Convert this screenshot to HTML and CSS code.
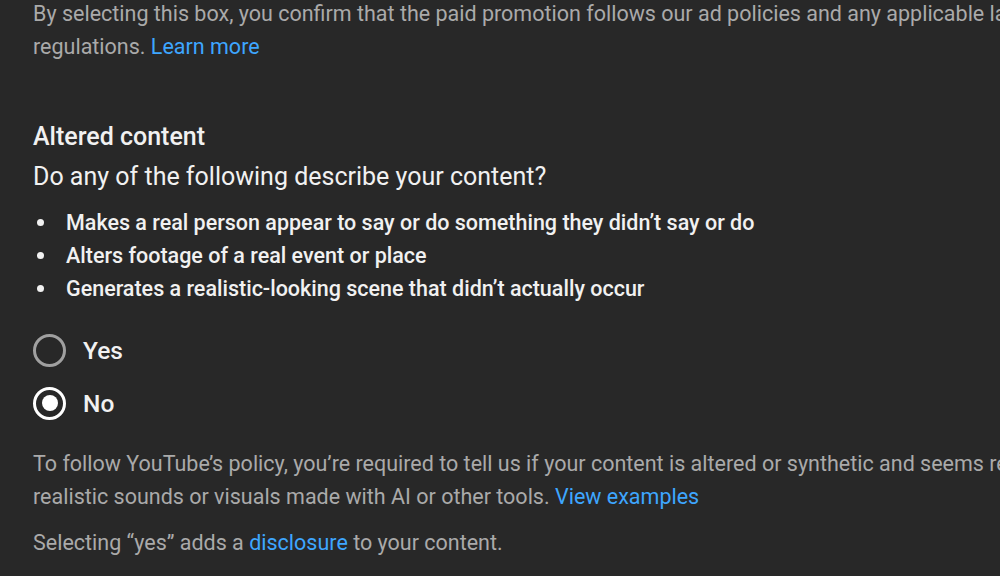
FILE: index.html
```html
<!DOCTYPE html>
<html lang="en">
<head>
<meta charset="utf-8">
<link rel="stylesheet" href="styles.css">
</head>
<body>
<div class="page">
  <p class="note">By selecting this box, you confirm that the paid promotion follows our ad policies and any applicable laws and<br>regulations. <a href="#">Learn more</a></p>

  <section class="altered">
    <h2 class="title">Altered content</h2>
    <h3 class="question">Do any of the following describe your content?</h3>
    <ul class="bullets">
      <li>Makes a real person appear to say or do something they didn’t say or do</li>
      <li>Alters footage of a real event or place</li>
      <li>Generates a realistic-looking scene that didn’t actually occur</li>
    </ul>

    <div class="radios">
      <label class="radio"><span class="circle"></span><span class="label">Yes</span></label>
      <label class="radio checked"><span class="circle"></span><span class="label">No</span></label>
    </div>

    <p class="note policy">To follow YouTube’s policy, you’re required to tell us if your content is altered or synthetic and seems real. This includes<br>realistic sounds or visuals made with AI or other tools. <a href="#">View examples</a></p>
    <p class="note disclosure">Selecting “yes” adds a <a href="#">disclosure</a> to your content.</p>
  </section>
</div>
</body>
</html>
```

FILE: styles.css
```css
html, body {
  margin: 0;
  padding: 0;
  background: #282828;
  overflow: hidden;
  height: 576px;
}
body {
  font-family: Roboto, "Liberation Sans", Arial, sans-serif;
  color: #f1f1f1;
}
.page {
  width: 1400px;
  padding-left: 33px;
}
.note {
  margin: 0;
  font-size: 21.5px;
  line-height: 33px;
  color: #aaaaaa;
  white-space: nowrap;
}
.note a {
  color: #3ea6ff;
  text-decoration: none;
}
.page > .note:first-child {
  margin-top: -3px;
}
.altered {
  margin-top: 58px;
}
.title {
  margin: 0;
  font-size: 25px;
  font-weight: 500;
  line-height: 32px;
}
.question {
  margin: 8px 0 0;
  font-size: 25px;
  font-weight: 400;
  line-height: 32px;
}
.bullets {
  margin: 13px 0 0;
  padding: 0;
  list-style: none;
  font-size: 21.5px;
  font-weight: 500;
  line-height: 33px;
}
.bullets li {
  display: flex;
  align-items: center;
  gap: 22px;
}
.bullets li::before {
  content: "";
  width: 7px;
  height: 7px;
  border-radius: 50%;
  background: #f1f1f1;
  flex: none;
  margin-left: 4px;
}
.radios {
  margin-top: 29px;
  display: flex;
  flex-direction: column;
  gap: 21px;
}
.radio {
  display: flex;
  align-items: center;
  gap: 17px;
  height: 32px;
}
.circle {
  border: 3px solid #a0a0a0;
  border-radius: 50%;
  box-sizing: border-box;
  width: 33px;
  height: 33px;
  flex: none;
  position: relative;
}
.radio.checked .circle {
  border-color: #ffffff;
}
.radio.checked .circle::after {
  content: "";
  position: absolute;
  left: 50%;
  top: 50%;
  width: 16px;
  height: 16px;
  margin: -8px 0 0 -8px;
  border-radius: 50%;
  background: #ffffff;
}
.label {
  font-size: 24.5px;
  font-weight: 500;
  color: #f1f1f1;
}
.policy {
  margin-top: 28px;
}
.disclosure {
  margin-top: 13px;
}
```
